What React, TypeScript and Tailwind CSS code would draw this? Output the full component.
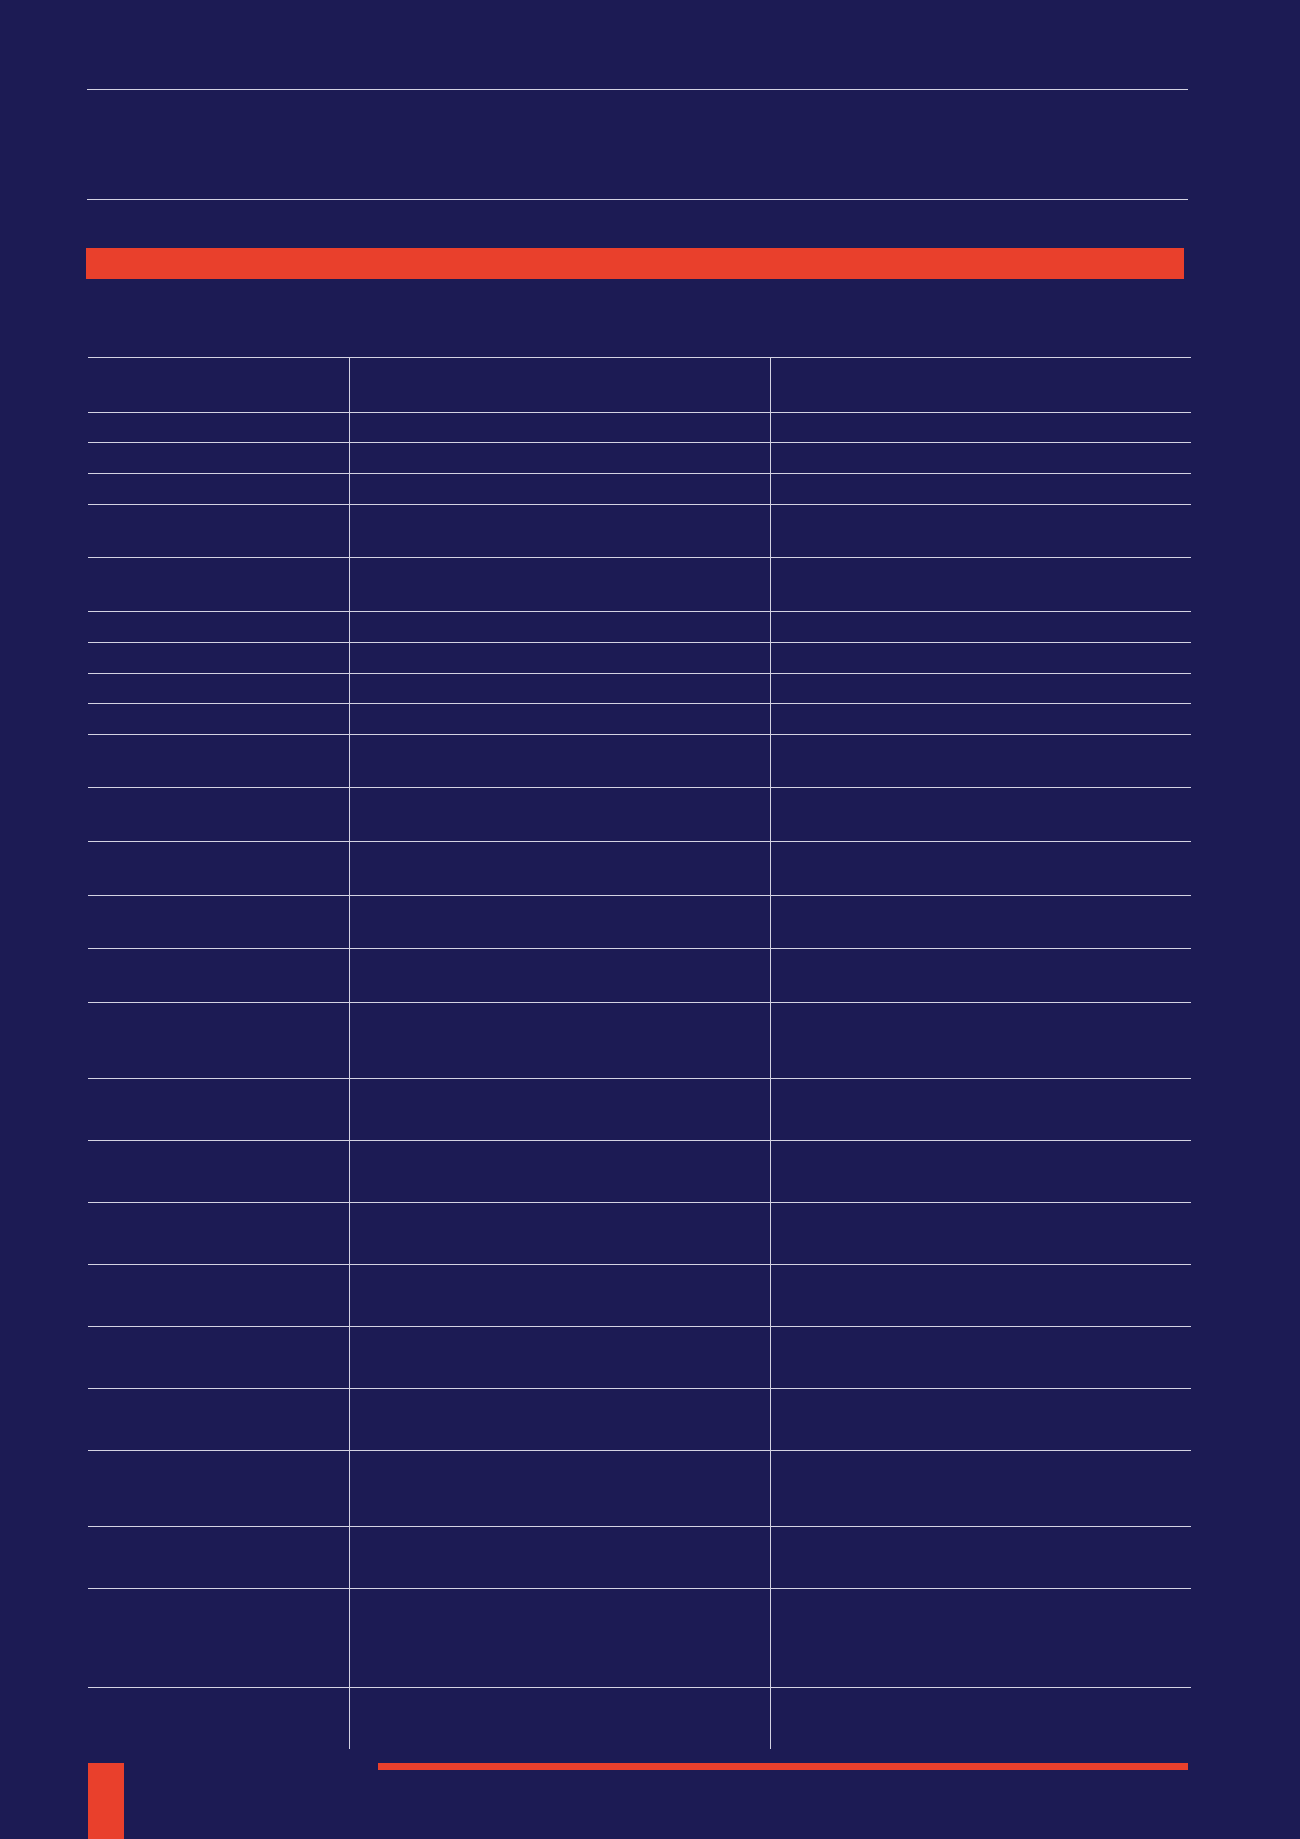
const rowHeights = [
  'h-[55px]', 'h-[30px]', 'h-[31px]', 'h-[31px]', 'h-[53px]', 'h-[54px]', 'h-[31px]', 'h-[31px]', 'h-[30px]',
  'h-[31px]', 'h-[53px]', 'h-[54px]', 'h-[54px]', 'h-[53px]', 'h-[54px]', 'h-[76px]', 'h-[62px]', 'h-[62px]',
  'h-[62px]', 'h-[62px]', 'h-[62px]', 'h-[62px]', 'h-[76px]', 'h-[62px]', 'h-[99px]', 'h-[62px]',
];

const App = () => {
  return (
    <div className="w-[1300px] h-[1839px] overflow-hidden bg-[#1c1b54] flex flex-col pt-[89px]">
      {/* Title block */}
      <div className="ml-[87px] w-[1101px] h-[111px] border-y border-[#d4d3e3]" />

      {/* Red banner */}
      <div className="ml-[86px] mt-[48px] w-[1098px] h-[31px] bg-[#e9402c]" />

      {/* Table */}
      <div className="ml-[88px] mt-[78px] w-[1103px] flex flex-col">
        {rowHeights.map((h, i) => (
          <div key={i} className={`${h} flex border-t border-[#d4d3e3]`}>
            <div className="w-[261px]" />
            <div className="w-[421px] border-l border-[#d4d3e3]" />
            <div className="w-[421px] border-l border-[#d4d3e3]" />
          </div>
        ))}
      </div>

      {/* Footer */}
      <div className="mt-[14px] flex items-start">
        <div className="ml-[88px] w-[36px] h-[76px] bg-[#e9402c]" />
        <div className="ml-[254px] w-[810px] h-[7px] bg-[#e9402c]" />
      </div>
    </div>
  );
};

export default App;
